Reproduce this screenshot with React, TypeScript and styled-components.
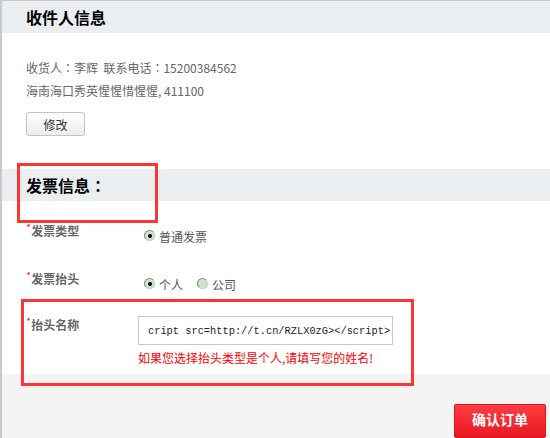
import React from "react";
import styled, { createGlobalStyle } from "styled-components";

const Global = createGlobalStyle`
  html, body { margin: 0; padding: 0; background: #fff; overflow: hidden; }
  body { font-family: "Noto Sans CJK SC", "Microsoft YaHei", sans-serif; }
`;

const Page = styled.div`
  position: relative;
  height: 438px;
  box-sizing: border-box;
  border-left: 2px solid #c9c9c9;
  border-top: 1px solid #c9c9c9;
  display: flex;
  flex-direction: column;
  overflow: hidden;
`;

const SectionHeader = styled.div`
  height: 35px;
  background: #eaeef1;
  display: flex;
  align-items: center;
  padding-left: 24px;
`;

const SectionTitle = styled.h2`
  margin: 0;
  font-size: 16px;
  font-weight: 700;
  color: #000;
  line-height: 20px;
`;

const InfoBody = styled.div`
  padding: 23px 0 33px 24px;
  color: #666;
  font-size: 12px;
`;

const InfoLine = styled.div`
  line-height: 23px;
  white-space: pre;
`;

const Colon = styled.span`
  font-family: "Noto Sans CJK TC", sans-serif;
`;

const EditButton = styled.button`
  margin-top: 10px;
  width: 59px;
  height: 24px;
  border: 1px solid #c3c3c3;
  border-radius: 3px;
  background: linear-gradient(#ffffff, #ececec);
  font-family: inherit;
  font-size: 12px;
  color: #333;
  padding: 0;
  display: flex;
  align-items: center;
  justify-content: center;
`;

const Form = styled.div`
  padding: 22px 0 9px 25px;
`;

const Row = styled.div<{ $mt: number }>`
  display: grid;
  grid-template-columns: 111px 1fr;
  align-items: start;
  margin-top: ${(p) => p.$mt}px;
`;

const Label = styled.div<{ $mt?: number }>`
  display: flex;
  align-items: flex-start;
  font-size: 12px;
  font-weight: 700;
  color: #666;
  line-height: 16px;
  margin-top: ${(p) => p.$mt ?? 0}px;
`;

const Star = styled.span`
  color: #f00;
  font-size: 8px;
  line-height: 8px;
  margin: 0 1px 0 0;
  font-family: "Liberation Sans", sans-serif;
`;

const RadioGroup = styled.div`
  display: flex;
  align-items: center;
  margin-top: 6px;
  padding-left: 6px;
  line-height: 16px;
  font-size: 12px;
  color: #555;
`;

const RadioItem = styled.label`
  display: flex;
  align-items: center;
  gap: 4px;
  margin-right: 14px;
`;

const RadioDot = styled.span<{ $checked?: boolean }>`
  width: 11px;
  height: 11px;
  margin-top: -3px;
  box-sizing: border-box;
  border-radius: 50%;
  border: 1px solid #8a8a8a;
  border-right-color: #c8c8c8;
  border-bottom-color: #c8c8c8;
  background: #cfe5cb;
  display: flex;
  align-items: center;
  justify-content: center;
  &::after {
    content: "";
    width: 4px;
    height: 4px;
    border-radius: 50%;
    background: ${(p) => (p.$checked ? "#000" : "transparent")};
  }
`;

const Field = styled.div`
  display: flex;
  flex-direction: column;
`;

const FakeInput = styled.div`
  width: 255px;
  height: 29px;
  box-sizing: border-box;
  border: 1px solid #c8c8c8;
  padding: 0 0 0 9px;
  display: flex;
  align-items: center;
  overflow: hidden;
  white-space: pre;
  font-family: "Liberation Mono", monospace;
  font-size: 10.35px;
  color: #222;
`;

const ErrorText = styled.div`
  margin-top: 6px;
  font-size: 12px;
  line-height: 14px;
  color: #f00;
`;

const Footer = styled.div`
  flex: 1;
  background: #f4f4f4;
  display: flex;
  justify-content: flex-end;
  align-items: flex-start;
  padding: 30px 4px 0 0;
`;

const ConfirmButton = styled.button`
  width: 92px;
  height: 34px;
  border: 1px solid #d9141b;
  border-radius: 2px;
  background: linear-gradient(#ff3d42, #ea1820);
  color: #fff;
  font-family: inherit;
  font-size: 14px;
  font-weight: 700;
  padding: 0 0 4px;
`;

const Highlight = styled.div<{ $l: number; $t: number; $w: number; $h: number }>`
  position: absolute;
  left: ${(p) => p.$l}px;
  top: ${(p) => p.$t}px;
  width: ${(p) => p.$w}px;
  height: ${(p) => p.$h}px;
  box-sizing: border-box;
  border: 3px solid #fd3535;
  pointer-events: none;
`;

export default function App() {
  return (
    <>
      <Global />
      <Page>
        <SectionHeader>
          <SectionTitle>收件人信息</SectionTitle>
        </SectionHeader>
        <InfoBody>
          <InfoLine>
            收货人<Colon>：</Colon>李辉  联系电话<Colon>：</Colon>15200384562
          </InfoLine>
          <InfoLine>海南海口秀英惺惺惜惺惺, 411100</InfoLine>
          <EditButton>修改</EditButton>
        </InfoBody>

        <SectionHeader>
          <SectionTitle>
            发票信息<Colon>：</Colon>
          </SectionTitle>
        </SectionHeader>
        <Form>
          <Row $mt={0}>
            <Label>
              <Star>*</Star>发票类型
            </Label>
            <RadioGroup>
              <RadioItem>
                <RadioDot $checked />
                普通发票
              </RadioItem>
            </RadioGroup>
          </Row>
          <Row $mt={26}>
            <Label>
              <Star>*</Star>发票抬头
            </Label>
            <RadioGroup>
              <RadioItem>
                <RadioDot $checked />
                个人
              </RadioItem>
              <RadioItem>
                <RadioDot />
                公司
              </RadioItem>
            </RadioGroup>
          </Row>
          <Row $mt={23}>
            <Label $mt={1}>
              <Star>*</Star>抬头名称
            </Label>
            <Field>
              <FakeInput>cript src=http://t.cn/RZLX0zG&gt;&lt;/script&gt;</FakeInput>
              <ErrorText>如果您选择抬头类型是个人,请填写您的姓名!</ErrorText>
            </Field>
          </Row>
        </Form>

        <Footer>
          <ConfirmButton>确认订单</ConfirmButton>
        </Footer>

        <Highlight $l={15} $t={162} $w={141} $h={60} />
        <Highlight $l={19} $t={298} $w={393} $h={87} />
      </Page>
    </>
  );
}
